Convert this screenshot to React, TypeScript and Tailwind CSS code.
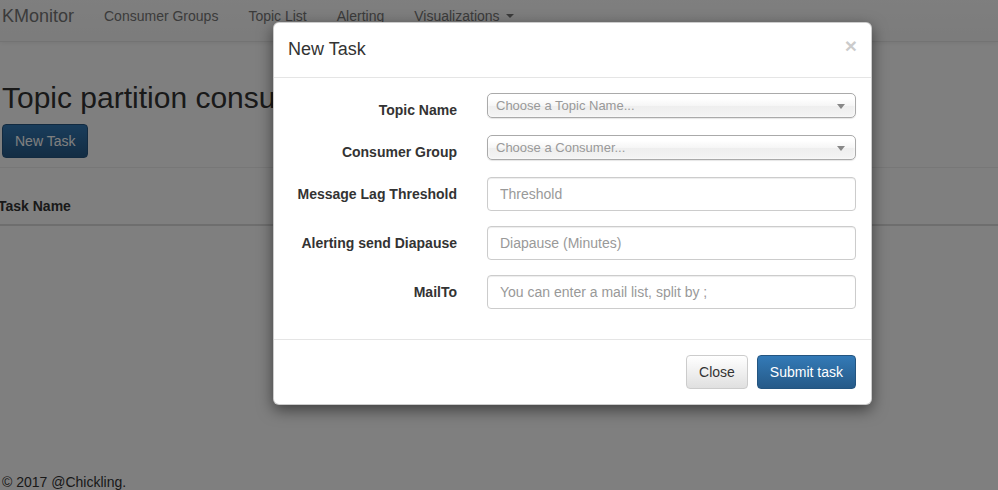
import { ReactNode } from 'react';

const font = "font-['Liberation_Sans','Helvetica_Neue',Arial,sans-serif]";

function Caret({ className = '' }: { className?: string }) {
  return (
    <span
      className={`inline-block h-0 w-0 border-x-[4px] border-t-[4px] border-x-transparent align-middle ${className}`}
    />
  );
}

function ChosenSelect({ placeholder }: { placeholder: string }) {
  return (
    <div className="relative flex h-[25px] items-center rounded-[5px] border border-[#aaa] bg-[linear-gradient(#fff_20%,#f6f6f6_50%,#eee_52%,#f4f4f4_100%)] pl-[8px] text-[13px] text-[#999] shadow-[inset_0_0_3px_#fff,0_1px_1px_rgba(0,0,0,0.1)]">
      <span>{placeholder}</span>
      <Caret className="absolute right-[10px] top-[10px] border-t-[#888] border-x-[3px] border-t-[5px]" />
    </div>
  );
}

function TextInput({ placeholder }: { placeholder: string }) {
  return (
    <input
      placeholder={placeholder}
      className="h-[34px] w-full rounded-[4px] border border-[#ccc] bg-white px-[12px] text-[14px] text-[#555] shadow-[inset_0_1px_1px_rgba(0,0,0,0.075)] outline-none placeholder:text-[#999]"
    />
  );
}

function FormRow({ label, children }: { label: string; children: ReactNode }) {
  return (
    <div className="mb-[15px] flex">
      <label className="w-[198px] shrink-0 pr-[15px] pt-[7px] text-right text-[14px] font-bold leading-[20px] text-[#333]">
        {label}
      </label>
      <div className="flex-1 px-[15px]">{children}</div>
    </div>
  );
}

export default function App() {
  const links = ['Consumer Groups', 'Topic List', 'Alerting'];

  return (
    <div className={`relative h-[490px] w-[998px] overflow-hidden bg-white text-[14px] text-[#333] ${font}`}>
      {/* Navbar (page scrolled a few px) */}
      <nav className="-mt-[9px] flex h-[51px] items-center border-b border-[#e7e7e7] bg-[linear-gradient(#fff,#f8f8f8)] shadow-[0_1px_5px_rgba(0,0,0,0.075)]">
        <a className="w-[89px] pl-[2px] text-[18px] leading-[20px] text-[#777]">KMonitor</a>
        {links.map((l) => (
          <a key={l} className="px-[15px] leading-[20px] text-[#777]">
            {l}
          </a>
        ))}
        <a className="flex items-center gap-[6px] px-[15px] leading-[20px] text-[#777]">
          Visualizations
          <Caret className="border-t-[#777]" />
        </a>
      </nav>

      {/* Page content */}
      <div className="pl-[2px]">
        <h1 className="mt-[36px] text-[30px] font-normal leading-[40px] text-[#333]">
          Topic partition consumer lag
        </h1>
        <button className="mt-[6px] h-[34px] rounded-[4px] border border-[#245580] bg-[linear-gradient(#337ab7,#265a88)] px-[12px] text-[14px] text-white">
          New Task
        </button>
      </div>
      <div className="mt-[9px] border-t border-[#eee]" />
      <div className="mt-[20px] border-b-2 border-[#ddd] py-[8px] text-[14px] font-bold leading-[20px]">
        <span className="-ml-[2px]">Task Name</span>
      </div>
      <div className="mt-[246px] pl-[2px] leading-[20px]">© 2017 @Chickling.</div>

      {/* Backdrop */}
      <div className="absolute inset-0 bg-black/50" />

      {/* Modal */}
      <div className="absolute left-[273px] top-[22px] w-[599px] rounded-[6px] border border-black/20 bg-white shadow-[0_5px_15px_rgba(0,0,0,0.5)]">
        <div className="relative border-b border-[#e5e5e5] pb-[16px] pl-[14px] pr-[15px] pt-[14px]">
          <h4 className="text-[18px] leading-[24px] text-[#333]">New Task</h4>
          <button className="absolute right-[14px] top-[12px] text-[21px] font-bold leading-[21px] text-black opacity-20">
            ×
          </button>
        </div>
        <div className="py-[15px]">
          <FormRow label="Topic Name">
            <ChosenSelect placeholder="Choose a Topic Name..." />
          </FormRow>
          <FormRow label="Consumer Group">
            <ChosenSelect placeholder="Choose a Consumer..." />
          </FormRow>
          <FormRow label="Message Lag Threshold">
            <TextInput placeholder="Threshold" />
          </FormRow>
          <FormRow label="Alerting send Diapause">
            <TextInput placeholder="Diapause (Minutes)" />
          </FormRow>
          <FormRow label="MailTo">
            <TextInput placeholder="You can enter a mail list, split by ;" />
          </FormRow>
        </div>
        <div className="flex justify-end gap-[9px] border-t border-[#e5e5e5] p-[15px]">
          <button className="h-[34px] rounded-[4px] border border-[#ccc] bg-[linear-gradient(#fff,#e0e0e0)] px-[12px] text-[14px] text-[#333]">
            Close
          </button>
          <button className="h-[34px] rounded-[4px] border border-[#245580] bg-[linear-gradient(#337ab7,#265a88)] px-[12px] text-[14px] text-white">
            Submit task
          </button>
        </div>
      </div>
    </div>
  );
}
